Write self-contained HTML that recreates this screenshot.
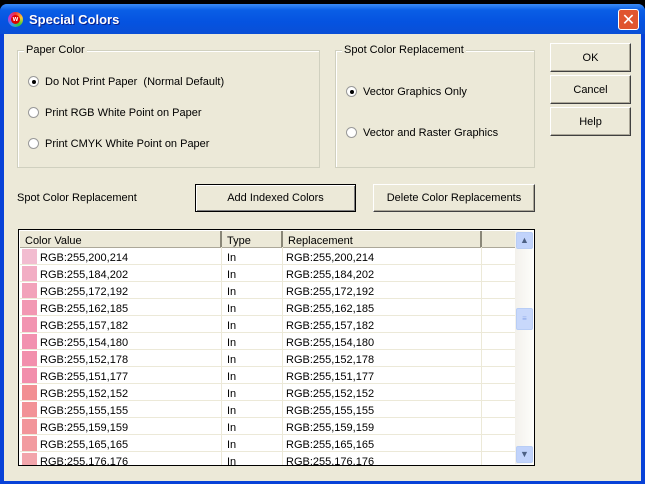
<!DOCTYPE html><html><head><style>
body{margin:0;width:645px;height:484px;background:#000;position:relative;overflow:hidden;font-family:"Liberation Sans",sans-serif;font-size:11px;color:#000}
.win{position:absolute;left:0;top:4px;width:645px;height:480px;background:#0842d8;border-radius:7px 7px 0 0}
.title{position:absolute;left:0;top:4px;width:645px;height:30px;border-radius:7px 7px 0 0;background:linear-gradient(#3b8cf5,#0a5fe6 20%,#0553e0 60%,#0a4fd6)}
.tt{position:absolute;left:29px;top:12px;color:#fff;font-weight:bold;font-size:13px;text-shadow:1px 1px #0a1e8a}
.client{position:absolute;left:4px;top:34px;width:637px;height:447px;background:#ece9d8}
.abs{position:absolute}
.grp{position:absolute;border:1px solid #d0d0bf;box-shadow:1px 1px 0 #fff inset}
.leg{position:absolute;top:-7px;background:#ece9d8;padding:0 2px}
.radio{position:absolute;width:11px;height:11px;border-radius:50%;background:#fff;border:1px solid #999;box-sizing:border-box}
.radio.on::after{content:"";position:absolute;left:3px;top:3px;width:4px;height:4px;border-radius:50%;background:#000}
.btn{position:absolute;border:1px solid #fff;border-right-color:#404040;border-bottom-color:#404040;box-shadow:inset -1px -1px #aca899;background:#ece9d8;text-align:center;box-sizing:border-box}
.list{position:absolute;left:18px;top:229px;width:517px;height:237px;border:1px solid #000;box-sizing:border-box;background:#fff;overflow:hidden}
.hd{position:absolute;top:1px;height:17px;background:#ece9d8;border-right:2px solid #8a8778;border-bottom:1px solid #aca899;box-sizing:border-box;padding:4px 0 0 5px}
.row{position:absolute;left:1px;width:495px;height:17px;border-bottom:1px solid #ece9d8;box-sizing:border-box}
.row span{position:absolute;top:4px}
.sw{position:absolute;left:2px;top:1px;width:15px;height:15px}
.vl{position:absolute;top:17px;width:1px;height:230px;background:#ece9d8}
</style></head><body>
<div class="win"></div><div class="title"></div>
<div class="abs" style="left:8px;top:12px;width:15px;height:15px;border-radius:50%;background:conic-gradient(#e33,#fc3,#3c3,#39f,#c3c,#e33)"><div style="position:absolute;left:3px;top:3px;width:9px;height:9px;border-radius:50%;background:#d00;color:#fff;font-size:7px;line-height:9px;text-align:center;font-weight:bold">w</div></div>
<div class="tt">Special Colors</div>
<div class="abs" style="left:618px;top:9px;width:21px;height:21px;border:1px solid #fff;border-radius:3px;background:#e0552f;color:#fff;font-size:16px;line-height:21px;text-align:center;box-sizing:border-box">✕</div>
<div class="client"></div>
<div class="grp" style="left:17px;top:50px;width:301px;height:116px"><div class="leg" style="left:6px">Paper Color</div></div>
<div class="radio on" style="left:28px;top:76px"></div><div class="abs" style="left:45px;top:76px">Do Not Print Paper&nbsp; (Normal Default)</div>
<div class="radio" style="left:28px;top:107px"></div><div class="abs" style="left:45px;top:107px">Print RGB White Point on Paper</div>
<div class="radio" style="left:28px;top:138px"></div><div class="abs" style="left:45px;top:138px">Print CMYK White Point on Paper</div>
<div class="grp" style="left:335px;top:50px;width:198px;height:116px"><div class="leg" style="left:6px">Spot Color Replacement</div></div>
<div class="radio on" style="left:346px;top:86px"></div><div class="abs" style="left:363px;top:86px">Vector Graphics Only</div>
<div class="radio" style="left:346px;top:127px"></div><div class="abs" style="left:363px;top:127px">Vector and Raster Graphics</div>
<div class="btn" style="left:550px;top:43px;width:81px;height:29px;line-height:29px">OK</div>
<div class="btn" style="left:550px;top:75px;width:81px;height:29px;line-height:29px">Cancel</div>
<div class="btn" style="left:550px;top:107px;width:81px;height:29px;line-height:29px">Help</div>
<div class="abs" style="left:17px;top:192px">Spot Color Replacement</div>
<div class="btn" style="left:195px;top:184px;width:161px;height:28px;line-height:27px;border:1px solid #000;box-shadow:inset 1px 1px #fff,inset -1px -1px #808080">Add Indexed Colors</div>
<div class="btn" style="left:373px;top:184px;width:162px;height:28px;line-height:27px">Delete Color Replacements</div>
<div class="list">
<div class="hd" style="left:1px;width:202px">Color Value</div>
<div class="hd" style="left:203px;width:61px">Type</div>
<div class="hd" style="left:264px;width:199px">Replacement</div>
<div class="hd" style="left:463px;width:35px;border-right:none"></div>
<div class="vl" style="left:202px"></div><div class="vl" style="left:263px"></div><div class="vl" style="left:462px"></div>
<div id="rows"></div>
<div class="abs" style="left:496px;top:1px;width:18px;height:233px;background:linear-gradient(90deg,#f3f1ec,#fdfdfa)"></div>
<div class="abs" style="left:497px;top:2px;width:15px;height:15px;border:1px solid #b8cdf5;border-radius:2px;background:#c1d3fb;color:#4d6185;font-size:9px;line-height:15px;text-align:center">▲</div>
<div class="abs" style="left:497px;top:78px;width:15px;height:20px;border:1px solid #b8cdf5;border-radius:2px;background:#c8d8fb;color:#8aa6e8;font-size:8px;line-height:20px;text-align:center">≡</div>
<div class="abs" style="left:497px;top:216px;width:15px;height:15px;border:1px solid #b8cdf5;border-radius:2px;background:#c1d3fb;color:#4d6185;font-size:9px;line-height:15px;text-align:center">▼</div>
</div>
<script>
var d=[[200,214],[184,202],[172,192],[162,185],[157,182],[154,180],[152,178],[151,177],[152,152],[155,155],[159,159],[165,165],[176,176]],h="";
d.forEach(function(c,i){var t="RGB:255,"+c[0]+","+c[1];var r=Math.round(c[0]*0.94),b=Math.round(c[1]*0.97);h+='<div class="row" style="top:'+(18+i*17)+'px"><div class="sw" style="background:rgb(242,'+r+','+b+')"></div><span style="left:20px">'+t+'</span><span style="left:207px">In</span><span style="left:266px">'+t+'</span></div>';});
document.getElementById("rows").innerHTML=h;
</script>
</body></html>
